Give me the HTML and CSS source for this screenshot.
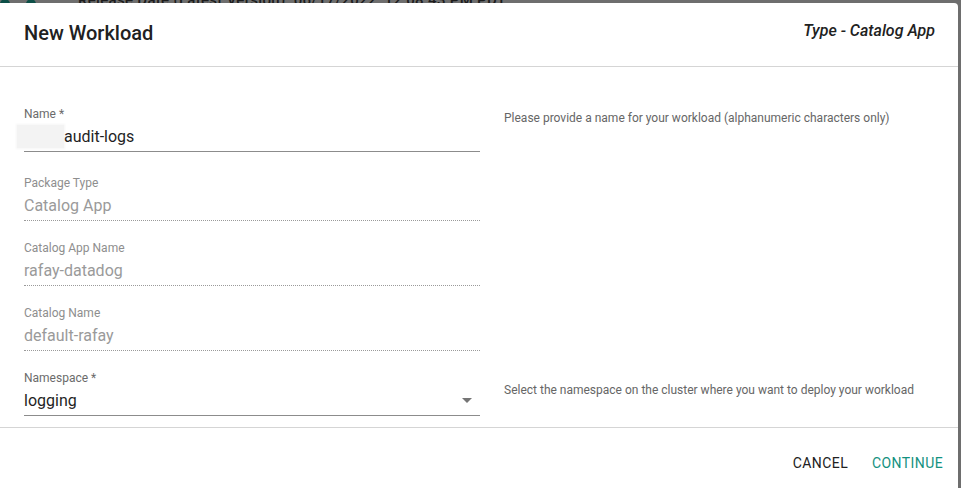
FILE: index.html
```html
<!DOCTYPE html>
<html lang="en">
<head>
<meta charset="utf-8">
<title>New Workload</title>
<link rel="stylesheet" href="styles.css">
</head>
<body>
<div class="backdrop-strip">
  <span class="dot"></span><span class="dot"></span>
  <span class="strip-text">Release Date (Latest Version): 06/17/2022, 12:08:43 PM PDT</span>
</div>
<div class="dialog">
  <header class="dialog-header">
    <h1 class="dialog-title">New Workload</h1>
    <div class="dialog-type">Type - Catalog App</div>
  </header>
  <main class="dialog-body">
    <div class="row row-first">
      <div class="field">
        <div class="label">Name *</div>
        <div class="input"><span class="redact"></span><span class="value">audit-logs</span></div>
      </div>
      <p class="helper helper-first">Please provide a name for your workload (alphanumeric characters only)</p>
    </div>
    <div class="row">
      <div class="field field-disabled">
        <div class="label">Package Type</div>
        <div class="input"><span class="value">Catalog App</span></div>
      </div>
    </div>
    <div class="row">
      <div class="field field-disabled">
        <div class="label">Catalog App Name</div>
        <div class="input"><span class="value">rafay-datadog</span></div>
      </div>
    </div>
    <div class="row">
      <div class="field field-disabled">
        <div class="label">Catalog Name</div>
        <div class="input"><span class="value">default-rafay</span></div>
      </div>
    </div>
    <div class="row row-last">
      <div class="field">
        <div class="label">Namespace *</div>
        <div class="input"><span class="value">logging</span>
          <svg class="arrow" width="10" height="5" viewBox="0 0 10 5"><path d="M0 0l5 5 5-5z" fill="#757575"/></svg>
        </div>
      </div>
      <p class="helper helper-last">Select the namespace on the cluster where you want to deploy your workload</p>
    </div>
  </main>
  <footer class="dialog-footer">
    <button class="btn btn-cancel">CANCEL</button>
    <button class="btn btn-primary">CONTINUE</button>
  </footer>
</div>
</body>
</html>
```
FILE: styles.css
```css
html, body {
  margin: 0;
  padding: 0;
  height: 100%;
  overflow: hidden;
}
body {
  background: #6e6e6e;
  font-family: Roboto, "Liberation Sans", Arial, sans-serif;
}
.backdrop-strip {
  height: 3px;
  overflow: hidden;
  display: flex;
  align-items: flex-end;
  white-space: nowrap;
}
.dot {
  display: inline-block;
  width: 10px;
  height: 10px;
  border-radius: 50%;
  background: #0d4f47;
  margin-right: 16px;
  flex: none;
  margin-bottom: -6px;
}
.strip-text {
  margin-left: 26px;
  font-size: 15px;
  font-weight: 500;
  color: #1c1c1c;
  line-height: 15px;
  margin-bottom: -5px;
  letter-spacing: 0.3px;
}
.dialog {
  width: 958px;
  height: 485px;
  overflow: hidden;
  background: #fff;
  border-radius: 0 4px 0 0;
  display: flex;
  flex-direction: column;
}
.dialog-header {
  flex: none;
  height: 64px;
  box-sizing: border-box;
  padding: 18px 23px 0 24px;
  border-bottom: 1px solid #d5d5d5;
  display: flex;
  justify-content: space-between;
  align-items: flex-start;
}
.dialog-title {
  margin: 0;
  font-size: 20px;
  font-weight: 500;
  line-height: 24px;
  color: #212121;
}
.dialog-type {
  font-size: 16px;
  font-weight: 500;
  font-style: italic;
  line-height: 19px;
  color: #212121;
}
.dialog-body {
  flex: none;
  padding: 40px 24px 11px 24px;
  border-bottom: 1px solid #d5d5d5;
}
.row {
  display: grid;
  grid-template-columns: 456px 1fr;
  column-gap: 24px;
  margin-bottom: 20px;
}
.row-first {
  margin-bottom: 24px;
}
.row-last {
  margin-bottom: 0;
}
.field {
  display: flex;
  flex-direction: column;
}
.label {
  font-size: 12px;
  line-height: 14px;
  color: #6b6b6b;
}
.input {
  display: flex;
  align-items: center;
  padding: 6px 0 5px 0;
  height: 19px;
  line-height: 19px;
  font-size: 16px;
  color: #1f1f1f;
  border-bottom: 1px solid #8c8c8c;
}
.value {
  flex: 1;
}
.redact {
  display: inline-block;
  width: 47px;
  height: 23px;
  margin: -2px 0 -2px -7px;
  background: #f3f3f3;
  box-shadow: 0 0 2px 1px #f6f6f6;
  flex: none;
}
.field-disabled .label {
  color: #8e8e8e;
}
.field-disabled .input {
  color: #9a9a9a;
  border-bottom: 1px dotted #9a9a9a;
}
.arrow {
  flex: none;
  margin-right: 8px;
}
.helper {
  margin: 0;
  font-size: 12px;
  line-height: 14px;
  color: #666;
}
.helper-first {
  padding-top: 4px;
}
.helper-last {
  padding-top: 12px;
}
.dialog-footer {
  flex: none;
  display: flex;
  justify-content: flex-end;
  padding: 17px 7px 7px 8px;
}
.btn {
  background: none;
  border: none;
  font-family: Roboto, "Liberation Sans", Arial, sans-serif;
  font-size: 14px;
  letter-spacing: 0.4px;
  line-height: 24px;
  padding: 6px 8px;
  margin-left: 8px;
  cursor: pointer;
}
.btn-cancel {
  color: #212121;
}
.btn-primary {
  color: #14917f;
}
```
